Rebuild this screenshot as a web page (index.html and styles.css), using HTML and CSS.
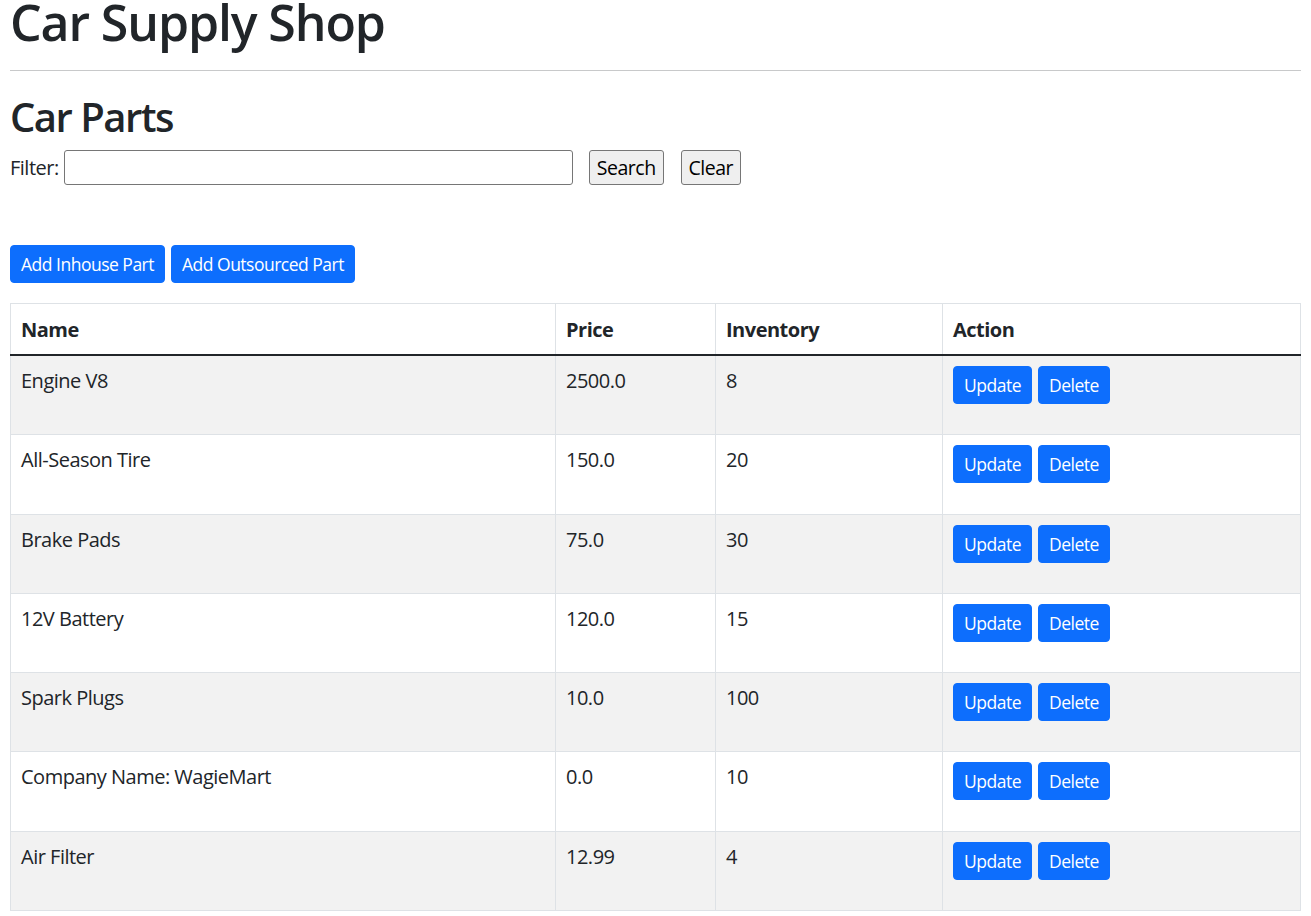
FILE: index.html
```html
<!DOCTYPE html>
<html lang="en">
<head>
<meta charset="utf-8">
<title>Car Supply Shop</title>
<link rel="stylesheet" href="styles.css">
</head>
<body>
<h1 class="site-title">Car Supply Shop</h1>
<hr class="divider">
<h2 class="section-title">Car Parts</h2>
<form class="filter-row">
  <label class="filter-label" for="filter">Filter:</label>
  <input class="filter-input" id="filter" type="text">
  <button class="plain-btn search-btn" type="button">Search</button>
  <button class="plain-btn clear-btn" type="button">Clear</button>
</form>
<div class="add-row">
  <a class="btn">Add Inhouse Part</a>
  <a class="btn">Add Outsourced Part</a>
</div>
<table class="parts-table">
  <colgroup>
    <col class="c-name"><col class="c-price"><col class="c-inv"><col class="c-action">
  </colgroup>
  <thead>
    <tr><th>Name</th><th>Price</th><th>Inventory</th><th>Action</th></tr>
  </thead>
  <tbody>
    <tr><td>Engine V8</td><td>2500.0</td><td>8</td><td><div class="actions"><a class="btn">Update</a><a class="btn">Delete</a></div></td></tr>
    <tr><td>All-Season Tire</td><td>150.0</td><td>20</td><td><div class="actions"><a class="btn">Update</a><a class="btn">Delete</a></div></td></tr>
    <tr><td>Brake Pads</td><td>75.0</td><td>30</td><td><div class="actions"><a class="btn">Update</a><a class="btn">Delete</a></div></td></tr>
    <tr><td>12V Battery</td><td>120.0</td><td>15</td><td><div class="actions"><a class="btn">Update</a><a class="btn">Delete</a></div></td></tr>
    <tr><td>Spark Plugs</td><td>10.0</td><td>100</td><td><div class="actions"><a class="btn">Update</a><a class="btn">Delete</a></div></td></tr>
    <tr><td>Company Name: WagieMart</td><td>0.0</td><td>10</td><td><div class="actions"><a class="btn">Update</a><a class="btn">Delete</a></div></td></tr>
    <tr><td>Air Filter</td><td>12.99</td><td>4</td><td><div class="actions"><a class="btn">Update</a><a class="btn">Delete</a></div></td></tr>
  </tbody>
</table>
</body>
</html>
```

FILE: styles.css
```css
* { box-sizing: border-box; }

body {
  margin: 0 10px 10px 10px;
  font-family: "Open Sans", "Noto Sans", sans-serif;
  font-size: 20px;
  line-height: 30px;
  letter-spacing: -0.5px;
  color: #212529;
  background: #fff;
}

.site-title {
  margin: 0;
  font-size: 50px;
  line-height: 44px;
  font-weight: 600;
  letter-spacing: -1.1px;
}

.divider {
  margin: 26px 0 22px;
  border: 0;
  border-top: 1px solid #c8c9ca;
  height: 0;
}

.section-title {
  margin: 0 0 9px;
  font-size: 40px;
  line-height: 48px;
  font-weight: 600;
  letter-spacing: -1.5px;
}

.filter-row {
  display: flex;
  align-items: center;
  height: 35px;
  margin: 0;
}

.filter-label { line-height: 30px; }

.filter-input {
  margin-left: 5px;
  width: 509px;
  height: 35px;
  border: 1px solid #767676;
  border-radius: 3px;
  font: inherit;
  padding: 0 4px;
}

.plain-btn {
  height: 35px;
  padding: 0;
  border: 1px solid #767676;
  border-radius: 3px;
  background: #efefef;
  color: #000;
  font-family: inherit;
  font-size: 19.5px;
  letter-spacing: -0.5px;
  line-height: 30px;
  text-align: center;
}
.search-btn { margin-left: 16px; width: 75px; }
.clear-btn { margin-left: 17px; width: 60px; }

.add-row {
  display: flex;
  gap: 6px;
  margin-top: 60px;
}

.btn {
  display: inline-block;
  height: 38px;
  padding: 5px 10px;
  border: 1px solid #0d6efd;
  border-radius: 4px;
  background: #0d6efd;
  color: #fff;
  font-size: 17.5px;
  line-height: 26px;
  letter-spacing: -0.5px;
  white-space: nowrap;
}

.parts-table {
  margin-top: 20px;
  width: 1290px;
  border-collapse: collapse;
  table-layout: fixed;
}
.c-name { width: 545px; }
.c-price { width: 160px; }
.c-inv { width: 227px; }
.c-action { width: 358px; }

.parts-table th,
.parts-table td {
  border: 1px solid #dee2e6;
  padding: 10px;
  text-align: left;
  vertical-align: top;
}

.parts-table th {
  padding: 11px 10px 9px;
  font-weight: 700;
  border-bottom: 2px solid #212529;
}

.parts-table tbody tr:nth-child(odd) td { background: #f2f2f2; }

.actions {
  display: flex;
  gap: 6px;
  margin-bottom: 20.3px;
}
```
